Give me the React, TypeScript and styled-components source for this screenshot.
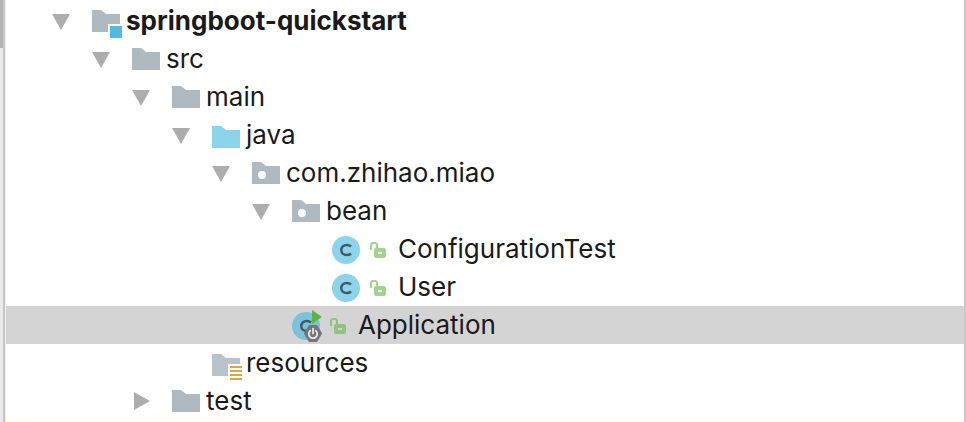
import React from 'react';
import styled, { createGlobalStyle } from 'styled-components';

const GlobalStyle = createGlobalStyle`
  * { box-sizing: border-box; }
  body { margin: 0; background: #ffffff; }
`;

const Panel = styled.div`
  display: flex;
  min-height: 100vh;
  overflow: hidden;
  border-right: 2px solid #c8c8c8;
  font-family: Inter, 'Liberation Sans', sans-serif;
  color: #1a1a1a;
`;

const Gutter = styled.div`
  flex: none;
  width: 6px;
  background: #ebebeb;
  border-right: 1px solid #f0f0f0;
  display: flex;
`;

const Thumb = styled.div`
  width: 3px;
  height: 48px;
  background: #b4b4b4;
`;

const Divider = styled.div`
  width: 2px;
  background: #c6c6c6;
`;

const Main = styled.main`
  flex: 1;
  display: flex;
  flex-direction: column;
  min-width: 0;
`;

const Tree = styled.ul`
  list-style: none;
  margin: 0;
  padding: 2px 0 0;
`;

const Row = styled.li<{ $level: number; $selected?: boolean }>`
  display: flex;
  align-items: center;
  height: 38px;
  padding-left: ${(p) => 46 + p.$level * 40}px;
  background: ${(p) => (p.$selected ? '#d4d4d4' : 'transparent')};
  white-space: nowrap;
`;

const Toggle = styled.button`
  flex: none;
  width: 40px;
  height: 38px;
  padding: 0;
  border: 0;
  background: none;
  display: flex;
`;

const ToggleSpace = styled.span`
  flex: none;
  width: 40px;
`;

const Icon = styled.svg`
  flex: none;
  display: block;
  overflow: visible;
`;

const Label = styled.span<{ $strong?: boolean; $gap: number }>`
  margin-left: ${(p) => p.$gap}px;
  font-size: 26px;
  line-height: 36px;
  font-weight: ${(p) => (p.$strong ? 700 : 400)};
`;

const LockSlot = styled.span`
  margin-left: 10px;
`;

const Footer = styled.div`
  flex: 1;
  min-height: 2px;
  background: #ffffe4;
`;

type Kind = 'module' | 'folder' | 'source' | 'package' | 'resources' | 'class' | 'runnable';

type Node = { name: string; level: number; kind: Kind; open?: boolean; selected?: boolean };

const nodes: Node[] = [
  { name: 'springboot-quickstart', level: 0, kind: 'module', open: true },
  { name: 'src', level: 1, kind: 'folder', open: true },
  { name: 'main', level: 2, kind: 'folder', open: true },
  { name: 'java', level: 3, kind: 'source', open: true },
  { name: 'com.zhihao.miao', level: 4, kind: 'package', open: true },
  { name: 'bean', level: 5, kind: 'package', open: true },
  { name: 'ConfigurationTest', level: 6, kind: 'class' },
  { name: 'User', level: 6, kind: 'class' },
  { name: 'Application', level: 5, kind: 'runnable', selected: true },
  { name: 'resources', level: 3, kind: 'resources' },
  { name: 'test', level: 2, kind: 'folder', open: false },
];

const FOLDER = 'M0 3H9L14 7H28V25H0Z';
const LOW_FOLDER = 'M0 5H9L14 9H28V27H0Z';

function Arrow({ open }: { open: boolean }) {
  return (
    <Icon width="20" height="38" viewBox="0 0 20 38" aria-hidden="true">
      <path d={open ? 'M0 12H18L9 28Z' : 'M2 10L18 19L2 28Z'} fill="#adadad" />
    </Icon>
  );
}

function ClassIcon({ runnable }: { runnable: boolean }) {
  return (
    <Icon width="28" height="30" viewBox="0 -2 28 30" aria-hidden="true">
      <circle cx="14" cy="14" r="14" fill={runnable ? '#7bc3dc' : '#8cd3ec'} />
      <path
        d="M19 10.500C17.800 9.300 16.400 8.900 14.800 8.900C11.500 8.900 9.300 11.100 9.300 14C9.300 16.900 11.500 19.100 14.800 19.100C16.400 19.100 17.800 18.700 19 17.500"
        fill="none"
        stroke="#435a66"
        strokeWidth="2.500"
      />
      {runnable && (
        <>
          <path d="M20 -2L30 5L20 12Z" fill="#5cb540" />
          <path
            d="M17.500 14H24.500L29 21.500L24.500 29H17.500L13 21.500Z"
            fill="#747678"
            stroke="#747678"
            strokeWidth="2"
            strokeLinejoin="round"
          />
          <path
            d="M18.300 18.700A4.200 4.200 0 1 0 23.700 18.700M21 16.500V21.500"
            fill="none"
            stroke="#ececec"
            strokeWidth="1.700"
            strokeLinecap="round"
          />
        </>
      )}
    </Icon>
  );
}

function FolderIcon({ kind }: { kind: Kind }) {
  return (
    <Icon width="28" height="28" viewBox="0 0 28 28" aria-hidden="true">
      {kind === 'folder' && <path d={FOLDER} fill="#aeb9c0" />}
      {kind === 'source' && <path d={LOW_FOLDER} fill="#8cd3ec" />}
      {kind === 'module' && (
        <>
          <path d="M0 3H9L14 7H28V17H16V25H0Z" fill="#aeb9c0" />
          <path d="M18 19H30V31H18Z" fill="#52bbe4" />
        </>
      )}
      {kind === 'package' && (
        <>
          <path d={FOLDER} fill="#aeb9c0" />
          <circle cx="10" cy="16" r="4" fill="#ffffff" />
        </>
      )}
      {kind === 'resources' && (
        <>
          <path d="M0 5H9L14 9H28V15H16V27H0Z" fill="#b8c2ca" />
          <path d="M18 18H30M18 22H30M18 26H30M18 30H30" stroke="#dba544" strokeWidth="2" />
        </>
      )}
    </Icon>
  );
}

function Lock({ dim }: { dim?: boolean }) {
  const color = dim ? '#91c380' : '#a2d48f';
  return (
    <Icon width="16" height="18" viewBox="0 -2 16 18" aria-hidden="true">
      <path d="M1 8V3Q1 1 3 1H5Q7 1 7 3V6" fill="none" stroke={color} strokeWidth="2" />
      <path
        fillRule="evenodd"
        d="M6 6H14Q16 6 16 8V14Q16 16 14 16H6Q4 16 4 14V8Q4 6 6 6ZM8 10V12H12V10Z"
        fill={color}
      />
    </Icon>
  );
}

export default function App() {
  return (
    <>
      <GlobalStyle />
      <Panel>
        <Gutter>
          <Thumb />
          <Divider />
        </Gutter>
        <Main>
          <Tree aria-label="Project">
            {nodes.map((n) => {
              const isClass = n.kind === 'class' || n.kind === 'runnable';
              return (
                <Row key={n.name} $level={n.level} $selected={n.selected}>
                  {n.open === undefined ? (
                    <ToggleSpace />
                  ) : (
                    <Toggle type="button" aria-expanded={n.open} aria-label={n.name}>
                      <Arrow open={n.open} />
                    </Toggle>
                  )}
                  {isClass ? (
                    <>
                      <ClassIcon runnable={n.kind === 'runnable'} />
                      <LockSlot>
                        <Lock dim={n.selected} />
                      </LockSlot>
                    </>
                  ) : (
                    <FolderIcon kind={n.kind} />
                  )}
                  <Label $gap={isClass ? 12 : 6} $strong={n.level === 0}>
                    {n.name}
                  </Label>
                </Row>
              );
            })}
          </Tree>
          <Footer />
        </Main>
      </Panel>
    </>
  );
}
